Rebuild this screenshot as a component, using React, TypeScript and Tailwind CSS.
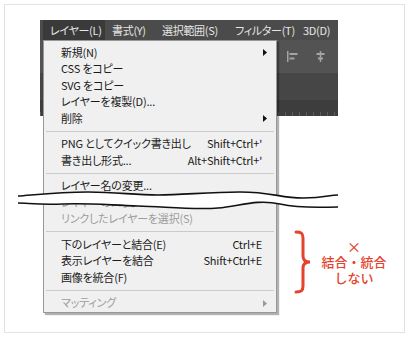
const jp = "font-['Noto_Sans_CJK_JP','Noto_Sans',sans-serif]";
const palt = "[font-feature-settings:'palt']";

type Item =
  | { kind: 'sep' }
  | { kind: 'item'; label: string; shortcut?: string; sub?: boolean; disabled?: boolean };

const items: Item[] = [
  { kind: 'item', label: '新規(N)', sub: true },
  { kind: 'item', label: 'CSS をコピー' },
  { kind: 'item', label: 'SVG をコピー' },
  { kind: 'item', label: 'レイヤーを複製(D)...' },
  { kind: 'item', label: '削除', sub: true },
  { kind: 'sep' },
  { kind: 'item', label: 'PNG としてクイック書き出し', shortcut: "Shift+Ctrl+'" },
  { kind: 'item', label: '書き出し形式...', shortcut: "Alt+Shift+Ctrl+'" },
  { kind: 'sep' },
  { kind: 'item', label: 'レイヤー名の変更...' },
  { kind: 'item', label: 'レイヤーのロック...', disabled: true },
  { kind: 'item', label: 'リンクしたレイヤーを選択(S)', disabled: true },
  { kind: 'sep' },
  { kind: 'item', label: '下のレイヤーと結合(E)', shortcut: 'Ctrl+E' },
  { kind: 'item', label: '表示レイヤーを結合', shortcut: 'Shift+Ctrl+E' },
  { kind: 'item', label: '画像を統合(F)' },
  { kind: 'sep' },
  { kind: 'item', label: 'マッティング', sub: true, disabled: true },
];

const menubar = [
  { label: 'レイヤー(L)', w: 'w-[62px]', active: true },
  { label: '書式(Y)', w: 'w-[50px]' },
  { label: '選択範囲(S)', w: 'w-[73px]' },
  { label: 'フィルター(T)', w: 'w-[68px]' },
  { label: '3D(D)', w: 'w-[42px]' },
];

function Arrow({ disabled }: { disabled?: boolean }) {
  return (
    <svg width="4" height="7" viewBox="0 0 4 7" className="absolute right-[9px] top-[5px]">
      <path d="M0 0L4 3.5L0 7Z" fill={disabled ? '#9a9a9a' : '#111'} />
    </svg>
  );
}

function Menu() {
  return (
    <div className="absolute left-[38px] top-[35px] w-[234px] bg-[#f0f0f0] border border-[#979797] shadow-[2px_2px_1px_rgba(0,0,0,0.3)] pt-[3px] pb-[1px]">
      {items.map((it, i) =>
        it.kind === 'sep' ? (
          <div key={i} className="h-[9px] flex items-center px-[2px]">
            <div className="w-full h-px bg-[#cbcbcb]" />
          </div>
        ) : (
          <div
            key={i}
            className={`relative h-[16.5px] flex items-center justify-between pl-[17px] pr-[14px] text-[11px] leading-none whitespace-nowrap ${
              it.disabled ? 'text-[#9c9c9c]' : 'text-[#1b1b1b]'
            }`}
          >
            <span className={`${palt} tracking-[-0.2px]`}>{it.label}</span>
            {it.shortcut && <span className="tracking-[-0.2px]">{it.shortcut}</span>}
            {it.sub && <Arrow disabled={it.disabled} />}
          </div>
        )
      )}
    </div>
  );
}

// tear across the menu; coordinates relative to the card
const waveTop = 'M0 8 C15 7 40 4 70 4 S115 7 140 7 S190 4 222 4 S262 10 285 10 S310 7 320 7';
const waveBottomRest = 'C305 19 285 21 262 16 S222 18 200 20 S150 19 120 18 S70 15 45 16 S10 15 0 15';

function Wave() {
  return (
    <svg width="320" height="28" viewBox="0 0 320 28" className="absolute left-[13px] top-[183px]">
      <path d={`${waveTop} L320 19 ${waveBottomRest} Z`} fill="#fff" />
      <path d={waveTop} fill="none" stroke="#111" strokeWidth="1.6" />
      <path d={`M320 19 ${waveBottomRest}`} fill="none" stroke="#111" strokeWidth="1.6" />
    </svg>
  );
}

function Note() {
  return (
    <div className="absolute left-[289px] top-[225px] flex items-center">
      <svg width="18" height="64" viewBox="0 0 18 64">
        <path
          d="M2 2 C7 2 9 3 9 8 L9 26 C9 30 11 32 16 32 C11 32 9 34 9 38 L9 56 C9 61 7 62 2 62"
          fill="none"
          stroke="#e5432c"
          strokeWidth="3"
          strokeLinecap="round"
        />
      </svg>
      <div className="ml-[8px] w-[68px] flex flex-col items-center text-[13px] leading-[16px] font-medium text-[#e5432c] whitespace-nowrap">
        <div className="h-[16px] text-[14px] leading-[16px]">×</div>
        <div className="h-[16px]">結合・統合</div>
        <div className="h-[16px]">しない</div>
      </div>
    </div>
  );
}

export default function App() {
  return (
    <div className={`w-[410px] h-[337px] bg-white p-[4px] ${jp}`}>
      <div className="relative w-[401px] h-[329px] border border-[#e2e2e2] bg-white">
        <div className="ml-[35px] mt-[15px] w-[298px] h-[96px] flex flex-col bg-[#3c3c3c]">
          <div className={`h-[20px] flex items-center bg-[#4b4b4b] pl-[3px] text-[11px] text-[#e6e6e6] leading-none whitespace-nowrap tracking-[-0.3px] ${palt}`}>
            {menubar.map((m) => (
              <div
                key={m.label}
                className={`${m.w} shrink-0 h-full flex items-center pl-[7px] ${m.active ? 'bg-[#3a3a3a]' : ''}`}
              >
                {m.label}
              </div>
            ))}
          </div>
          <div className="h-[33px] bg-[#535353] flex items-center justify-end gap-[17px] pr-[12px]">
            <svg width="11" height="11" viewBox="0 0 11 11">
              <rect x="0" y="0" width="1.5" height="11" fill="#a4a4a4" />
              <rect x="2.5" y="2" width="8" height="2" fill="#a4a4a4" />
              <rect x="2.5" y="6.5" width="5" height="2" fill="#a4a4a4" />
            </svg>
            <svg width="11" height="11" viewBox="0 0 11 11">
              <rect x="4.75" y="0" width="1.5" height="11" fill="#a4a4a4" />
              <rect x="1.5" y="2" width="8" height="2" fill="#a4a4a4" />
              <rect x="3" y="6.5" width="5" height="2" fill="#a4a4a4" />
            </svg>
          </div>
          <div className="h-[27px] bg-[#464646]" />
          <div className="flex-1 bg-[#3d3d3d] flex items-end">
            <div className="w-full h-[4px] bg-[repeating-linear-gradient(90deg,#5c5c5c_0_1px,transparent_1px_7px)]" />
          </div>
        </div>
        <Menu />
        <Wave />
        <Note />
      </div>
    </div>
  );
}
